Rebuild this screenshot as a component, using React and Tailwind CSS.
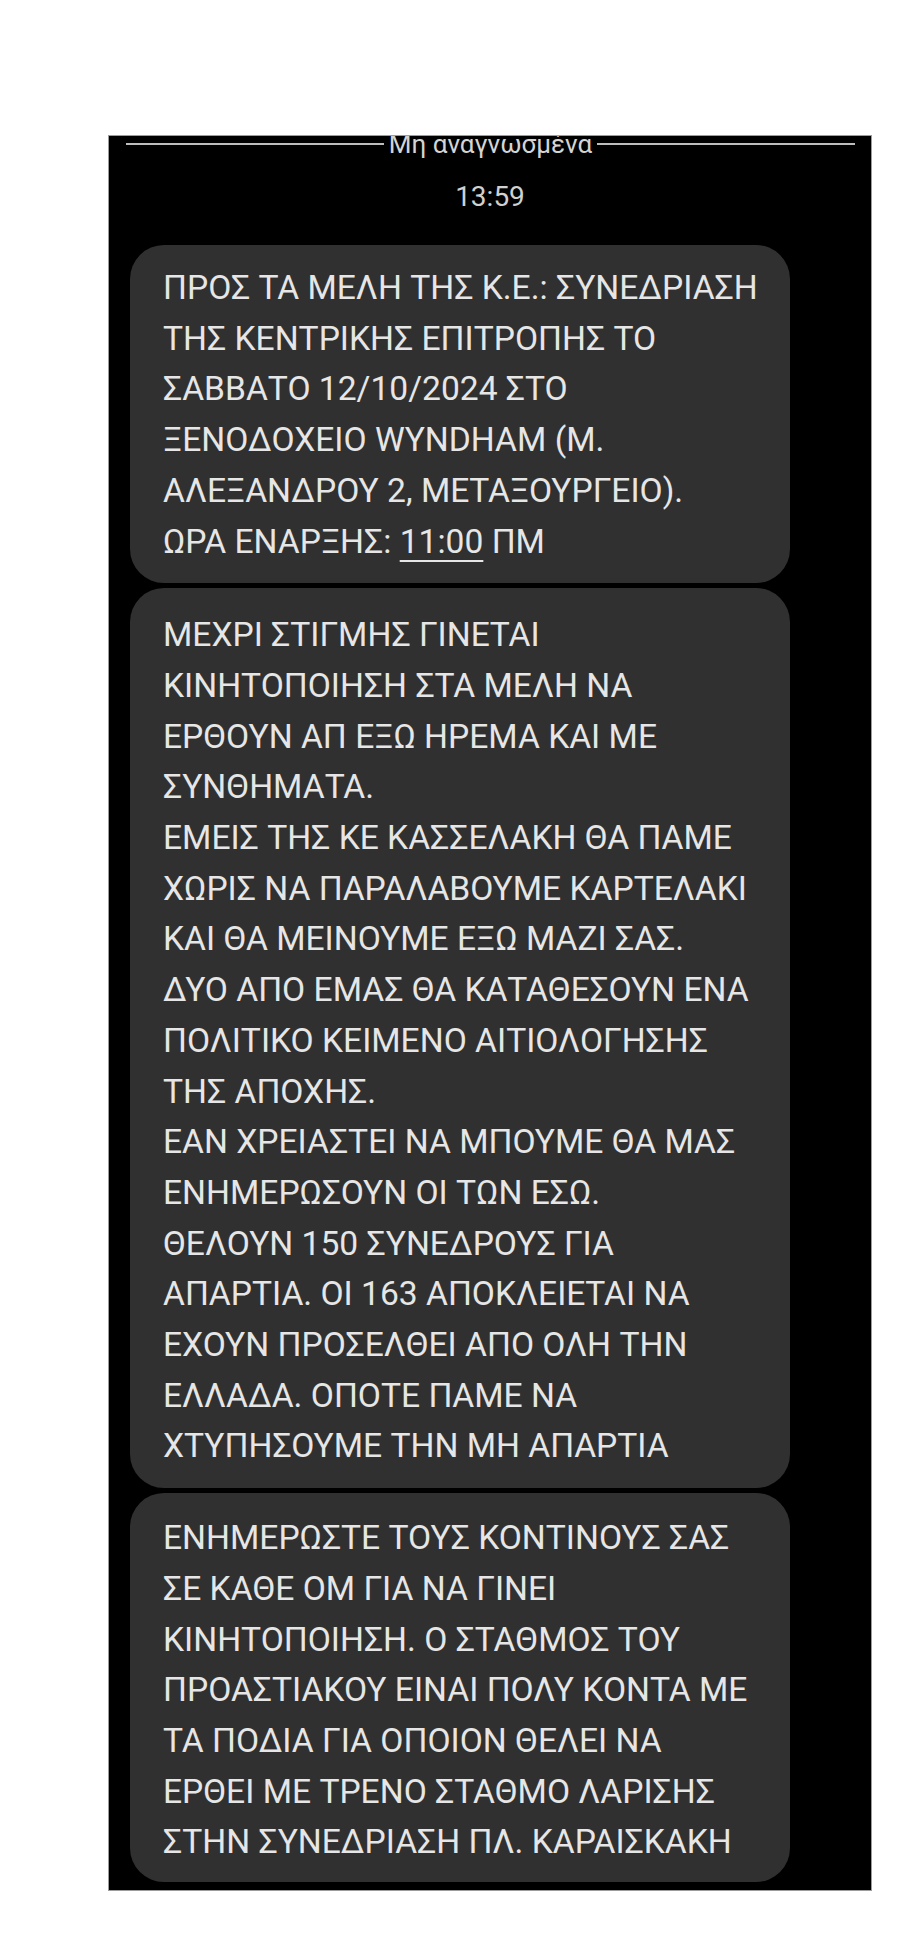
import React from 'react';

const messages = [
  {
    pad: 'pt-[18px] pb-[16px]',
    lines: [
      'ΠΡΟΣ ΤΑ ΜΕΛΗ ΤΗΣ Κ.Ε.: ΣΥΝΕΔΡΙΑΣΗ',
      'ΤΗΣ ΚΕΝΤΡΙΚΗΣ ΕΠΙΤΡΟΠΗΣ ΤΟ',
      'ΣΑΒΒΑΤΟ 12/10/2024 ΣΤΟ',
      'ΞΕΝΟΔΟΧΕΙΟ WYNDHAM (Μ.',
      'ΑΛΕΞΑΝΔΡΟΥ 2, ΜΕΤΑΞΟΥΡΓΕΙΟ).',
      null,
    ],
  },
  {
    pad: 'pt-[22px] pb-[16px]',
    lines: [
      'ΜΕΧΡΙ ΣΤΙΓΜΗΣ ΓΙΝΕΤΑΙ',
      'ΚΙΝΗΤΟΠΟΙΗΣΗ ΣΤΑ ΜΕΛΗ ΝΑ',
      'ΕΡΘΟΥΝ ΑΠ ΕΞΩ ΗΡΕΜΑ ΚΑΙ ΜΕ',
      'ΣΥΝΘΗΜΑΤΑ.',
      'ΕΜΕΙΣ ΤΗΣ ΚΕ ΚΑΣΣΕΛΑΚΗ ΘΑ ΠΑΜΕ',
      'ΧΩΡΙΣ ΝΑ ΠΑΡΑΛΑΒΟΥΜΕ ΚΑΡΤΕΛΑΚΙ',
      'ΚΑΙ ΘΑ ΜΕΙΝΟΥΜΕ ΕΞΩ ΜΑΖΙ ΣΑΣ.',
      'ΔΥΟ ΑΠΟ ΕΜΑΣ ΘΑ ΚΑΤΑΘΕΣΟΥΝ ΕΝΑ',
      'ΠΟΛΙΤΙΚΟ ΚΕΙΜΕΝΟ ΑΙΤΙΟΛΟΓΗΣΗΣ',
      'ΤΗΣ ΑΠΟΧΗΣ.',
      'ΕΑΝ ΧΡΕΙΑΣΤΕΙ ΝΑ ΜΠΟΥΜΕ ΘΑ ΜΑΣ',
      'ΕΝΗΜΕΡΩΣΟΥΝ ΟΙ ΤΩΝ ΕΣΩ.',
      'ΘΕΛΟΥΝ 150 ΣΥΝΕΔΡΟΥΣ ΓΙΑ',
      'ΑΠΑΡΤΙΑ. ΟΙ 163 ΑΠΟΚΛΕΙΕΤΑΙ ΝΑ',
      'ΕΧΟΥΝ ΠΡΟΣΕΛΘΕΙ ΑΠΟ ΟΛΗ ΤΗΝ',
      'ΕΛΛΑΔΑ. ΟΠΟΤΕ ΠΑΜΕ ΝΑ',
      'ΧΤΥΠΗΣΟΥΜΕ ΤΗΝ ΜΗ ΑΠΑΡΤΙΑ',
    ],
  },
  {
    pad: 'pt-[20px] pb-[14px]',
    lines: [
      'ΕΝΗΜΕΡΩΣΤΕ ΤΟΥΣ ΚΟΝΤΙΝΟΥΣ ΣΑΣ',
      'ΣΕ ΚΑΘΕ ΟΜ ΓΙΑ ΝΑ ΓΙΝΕΙ',
      'ΚΙΝΗΤΟΠΟΙΗΣΗ. Ο ΣΤΑΘΜΟΣ ΤΟΥ',
      'ΠΡΟΑΣΤΙΑΚΟΥ ΕΙΝΑΙ ΠΟΛΥ ΚΟΝΤΑ ΜΕ',
      'ΤΑ ΠΟΔΙΑ ΓΙΑ ΟΠΟΙΟΝ ΘΕΛΕΙ ΝΑ',
      'ΕΡΘΕΙ ΜΕ ΤΡΕΝΟ ΣΤΑΘΜΟ ΛΑΡΙΣΗΣ',
      'ΣΤΗΝ ΣΥΝΕΔΡΙΑΣΗ ΠΛ. ΚΑΡΑΙΣΚΑΚΗ',
    ],
  },
];

const Bubble = ({ pad, lines }) => (
  <div className={`ml-[21px] w-[660px] rounded-[34px] bg-[#303030] pl-[33px] ${pad}`}>
    {lines.map((line, i) =>
      line === null ? (
        <div key={i} className="whitespace-nowrap">
          ΩΡΑ ΕΝΑΡΞΗΣ:{' '}
          <span className="underline decoration-[2px] underline-offset-[7px]">11:00</span> ΠΜ
        </div>
      ) : (
        <div key={i} className="whitespace-nowrap">
          {line}
        </div>
      )
    )}
  </div>
);

export default function App() {
  return (
    <div className="min-h-screen bg-white pt-[135px] pl-[108px] font-['Roboto',sans-serif]">
      <div className="flex h-[1756px] w-[764px] flex-col overflow-hidden border border-[#9c9c9c] bg-black">
        {/* unread divider */}
        <div className="flex h-[16px] items-center pl-[17px] pr-[16px]">
          <div className="h-[2px] flex-1 bg-[#bdbdbd]" />
          <span className="mx-[5px] text-[26px] leading-[16px] text-[#d4d4d4]">Μη αναγνωσμένα</span>
          <div className="h-[2px] flex-1 bg-[#bdbdbd]" />
        </div>

        <div className="mt-[31px] text-center text-[28px] leading-[28px] text-[#d0d0d0]">13:59</div>

        <div className="mt-[34px] flex flex-col gap-[5px] text-[33.6px] leading-[50.7px] text-[#e6e6e6]">
          {messages.map((m, i) => (
            <Bubble key={i} pad={m.pad} lines={m.lines} />
          ))}
        </div>
      </div>
    </div>
  );
}
